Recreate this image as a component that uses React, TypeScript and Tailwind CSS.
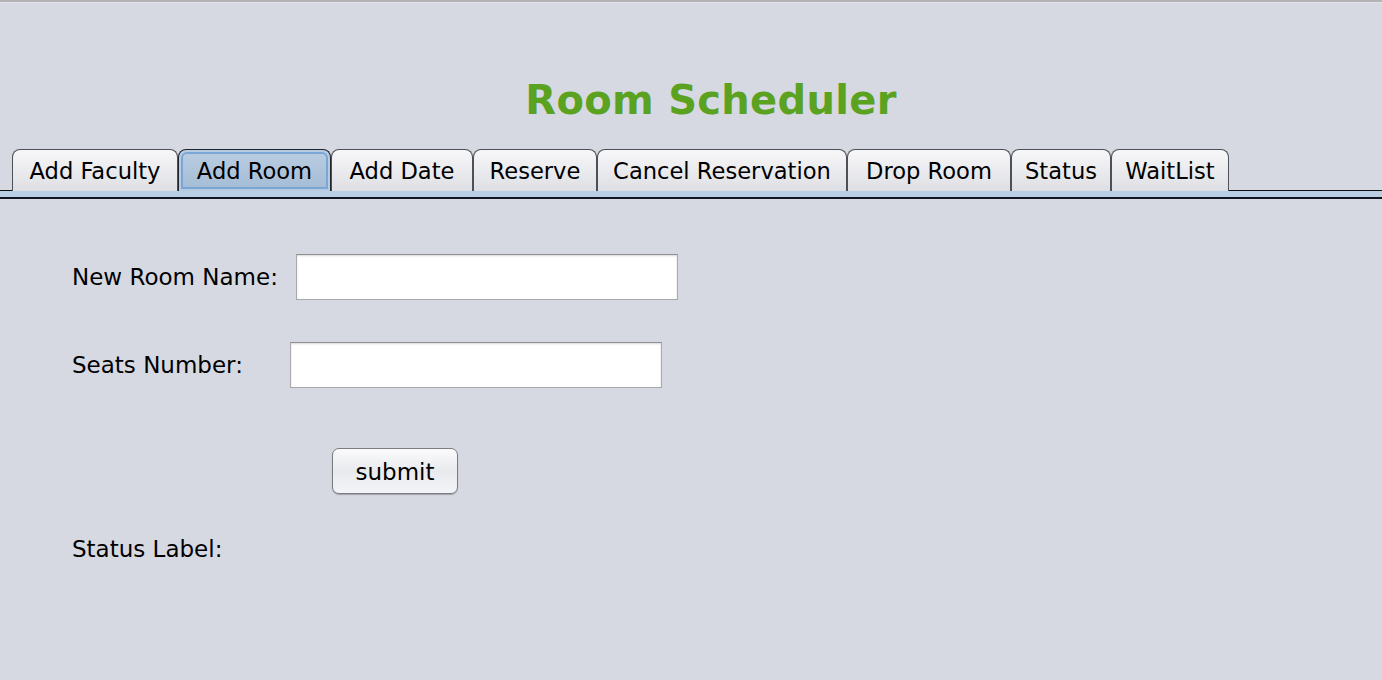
const tabs = [
  { label: 'Add Faculty', w: 'w-[166px]' },
  { label: 'Add Room', w: 'w-[153px]' },
  { label: 'Add Date', w: 'w-[142px]' },
  { label: 'Reserve', w: 'w-[124px]' },
  { label: 'Cancel Reservation', w: 'w-[250px]' },
  { label: 'Drop Room', w: 'w-[164px]' },
  { label: 'Status', w: 'w-[100px]' },
  { label: 'WaitList', w: 'w-[118px]' },
]

const App = () => {
  const selected = 'Add Room'

  return (
    <div
      className="w-[1382px] h-[680px] bg-[#d6d9e1] text-black overflow-hidden"
      style={{ fontFamily: '"DejaVu Sans", sans-serif' }}
    >
      <div className="h-[2px] bg-[#b3b3b6]" />
      <div className="h-px bg-[#e2e4ea]" />

      <div className="h-[146px] flex justify-center items-start pt-[73px]">
        <h1
          className="text-[40px] leading-[48px] font-bold text-[#5aa21f] tracking-[0.3px] pl-[40px]"
          style={{ fontFamily: '"Comic Sans MS", "DejaVu Sans", sans-serif' }}
        >
          Room Scheduler
        </h1>
      </div>

      <div className="flex items-end h-[42px]">
        <div className="w-[12px] h-full border-b border-[#111]" />
        {tabs.map((t) => {
          const isSel = t.label === selected
          return (
            <div
              key={t.label}
              className={`${t.w} h-[42px] rounded-t-[8px] border border-b-0 flex items-center justify-center text-[22.6px] leading-none pt-[2px] ${
                isSel
                  ? 'border-[#20242c] bg-[#b6cbe0] p-[2px]'
                  : 'border-[#4e5057] border-b border-b-[#111] bg-gradient-to-b from-[#f7f7f9] to-[#dedfe4]'
              }`}
            >
              {isSel ? (
                <div className="w-full h-full rounded-t-[6px] border-2 border-[#7aa6d6] bg-gradient-to-b from-[#b9cce0] to-[#a5bdd6] flex items-center justify-center pt-[2px]">
                  {t.label}
                </div>
              ) : (
                t.label
              )}
            </div>
          )
        })}
        <div className="flex-1 h-full border-b border-[#111]" />
      </div>
      <div className="h-[6px] bg-[#b8cee4]" />
      <div className="h-[2px] bg-[#101522]" />

      <div className="pl-[72px] pt-[55px] text-[23px]">
        <div className="flex items-center h-[46px]">
          <span className="w-[224px]">New Room Name:</span>
          <input className="w-[382px] h-[46px] bg-white border border-[#a9a9ab] border-t-[#8e8e90] shadow-[inset_0_1px_2px_rgba(0,0,0,0.15)] outline-none" />
        </div>
        <div className="flex items-center h-[46px] mt-[42px]">
          <span className="w-[218px]">Seats Number:</span>
          <input className="w-[372px] h-[46px] bg-white border border-[#a9a9ab] border-t-[#8e8e90] shadow-[inset_0_1px_2px_rgba(0,0,0,0.15)] outline-none" />
        </div>
        <div className="mt-[60px] pl-[260px]">
          <button className="w-[126px] h-[46px] rounded-[7px] border border-[#7b7c80] bg-gradient-to-b from-[#fbfbfc] via-[#e9eaee] to-[#f3f4f8] shadow-[0_1px_1px_rgba(0,0,0,0.25)] text-[23px] leading-none pt-[2px]">
            submit
          </button>
        </div>
        <div className="mt-[37px] h-[36px] flex items-center">Status Label:</div>
      </div>
    </div>
  )
}

export default App
